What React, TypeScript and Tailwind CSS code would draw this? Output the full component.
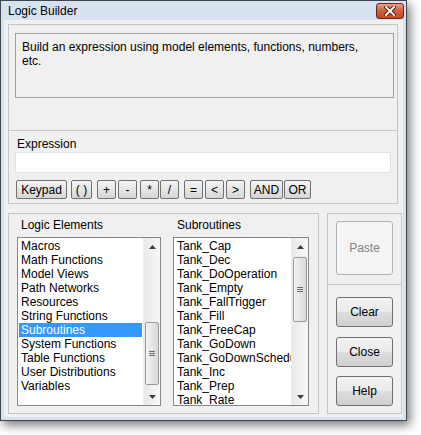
import React from "react";

const font = { fontFamily: '"Liberation Sans", Arial, sans-serif' };

const logicElements = [
  "Macros",
  "Math Functions",
  "Model Views",
  "Path Networks",
  "Resources",
  "String Functions",
  "Subroutines",
  "System Functions",
  "Table Functions",
  "User Distributions",
  "Variables",
];

const subroutines = [
  "Tank_Cap",
  "Tank_Dec",
  "Tank_DoOperation",
  "Tank_Empty",
  "Tank_FallTrigger",
  "Tank_Fill",
  "Tank_FreeCap",
  "Tank_GoDown",
  "Tank_GoDownSchedule",
  "Tank_Inc",
  "Tank_Prep",
  "Tank_Rate",
];

function Arrow({ up }: { up?: boolean }) {
  return (
    <div className="flex h-[17px] items-center justify-center">
      <svg width="7" height="4" viewBox="0 0 7 4">
        {up ? <path d="M3.5 0 L7 4 L0 4 Z" fill="#3c3c3c" /> : <path d="M0 0 L7 0 L3.5 4 Z" fill="#3c3c3c" />}
      </svg>
    </div>
  );
}

function ScrollBar({ offset, thumb }: { offset: string; thumb: string }) {
  return (
    <div className="flex w-[17px] shrink-0 flex-col border-l border-[#ececec] bg-gradient-to-r from-[#e9e9e9] to-[#f7f7f7]">
      <Arrow up />
      <div className={offset} />
      <div
        className={`${thumb} mx-[1px] flex items-center justify-center rounded-[2px] border border-[#9b9b9b] bg-gradient-to-r from-[#f3f3f3] to-[#d9d9d9]`}
      >
        <div className="flex flex-col gap-[1px]">
          <div className="h-px w-[6px] bg-[#6e6e6e]" />
          <div className="h-px w-[6px] bg-[#6e6e6e]" />
          <div className="h-px w-[6px] bg-[#6e6e6e]" />
        </div>
      </div>
      <div className="flex-1" />
      <Arrow />
    </div>
  );
}

function ListBox({
  items,
  selected,
  width,
  offset,
  thumb,
}: {
  items: string[];
  selected?: string;
  width: string;
  offset: string;
  thumb: string;
}) {
  return (
    <div className={`${width} flex h-[169px] border border-[#828790] bg-white`}>
      <div className="min-w-0 flex-1 overflow-hidden pt-[1px]">
        {items.map((item) => (
          <div
            key={item}
            className={`mx-[1px] h-[14px] whitespace-nowrap pl-[2px] text-[12px] leading-[14px] ${
              item === selected ? "bg-[#3399ff] text-white" : "text-black"
            }`}
          >
            {item}
          </div>
        ))}
      </div>
      <ScrollBar offset={offset} thumb={thumb} />
    </div>
  );
}

function OpButton({ label, className }: { label: string; className: string }) {
  return (
    <button
      className={`${className} flex h-[19px] items-center justify-center rounded-[2px] border border-[#707070] bg-gradient-to-b from-[#f4f4f4] to-[#d6d6d6] text-[12px] leading-none text-black`}
    >
      {label}
    </button>
  );
}

function SideButton({ label, className }: { label: string; className: string }) {
  return (
    <button
      className={`${className} flex h-[30px] w-[57px] items-center justify-center rounded-[3px] border border-[#707070] bg-[linear-gradient(to_bottom,#f2f2f2_0%,#ebebeb_48%,#dddddd_52%,#cfcfcf_100%)] text-[12px] text-black`}
    >
      {label}
    </button>
  );
}

export default function App() {
  return (
    <div className="h-[435px] w-[421px] bg-white" style={font}>
      <div className="flex h-[421px] w-[407px] flex-col border border-[#3f4650] bg-[#d8e2ee] shadow-[3px_4px_10px_rgba(0,0,0,0.55)]">
        {/* title bar */}
        <div className="flex h-[19px] shrink-0 items-center justify-between pl-[7px] pr-[2px]">
          <span className="text-[12px] text-black">Logic Builder</span>
          <div className="mt-[1px] flex h-[16px] w-[28px] items-center justify-center rounded-[3px] border border-[#6d2717] bg-gradient-to-b from-[#e3a08d] via-[#cf5d3f] to-[#c4472b]">
            <svg width="12" height="10" viewBox="0 0 12 10">
              <path d="M2 1 L10 9 M10 1 L2 9" stroke="#5a1a0d" strokeWidth="4" strokeLinecap="square" />
              <path d="M2 1 L10 9 M10 1 L2 9" stroke="#ffffff" strokeWidth="2" strokeLinecap="square" />
            </svg>
          </div>
        </div>

        {/* body */}
        <div className="mx-[3px] mb-[3px] flex flex-1 flex-col bg-[#f0f0f0] pl-[4px] pt-[4px]">
          {/* description + expression */}
          <div className="w-[390px] border border-[#c5c5c5]">
            <div className="h-[106px] border-b border-[#c5c5c5] pl-[6px] pt-[8px]">
              <div className="h-[65px] w-[379px] border border-[#a0a0a0] px-[6px] pt-[6px] text-[12px] leading-[14px] text-black">
                Build an expression using model elements, functions, numbers,
                <br />
                etc.
              </div>
            </div>
            <div className="h-[72px] pl-[6px] pt-[6px]">
              <div className="pl-[2px] text-[12px] leading-[14px] text-black">Expression</div>
              <div className="mt-[1px] h-[21px] w-[376px] border border-[#e3e3e3] bg-white" />
              <div className="mt-[7px] flex">
                <OpButton label="Keypad" className="ml-[1px] w-[51px]" />
                <OpButton label="( )" className="ml-[4px] w-[21px]" />
                <OpButton label="+" className="ml-[5px] w-[19px]" />
                <OpButton label="-" className="ml-[2px] w-[19px]" />
                <OpButton label="*" className="ml-[3px] w-[19px]" />
                <OpButton label="/" className="ml-[1px] w-[19px]" />
                <OpButton label="=" className="ml-[5px] w-[19px]" />
                <OpButton label="<" className="ml-[2px] w-[19px]" />
                <OpButton label=">" className="ml-[2px] w-[19px]" />
                <OpButton label="AND" className="ml-[5px] w-[33px]" />
                <OpButton label="OR" className="ml-[1px] w-[27px]" />
              </div>
            </div>
          </div>

          {/* lower section */}
          <div className="mt-[9px] flex">
            <div className="flex h-[201px] w-[311px] border border-[#c5c5c5] pl-[8px] pt-[4px]">
              <div>
                <div className="pl-[4px] text-[12px] leading-[14px] text-black">Logic Elements</div>
                <div className="mt-[5px]">
                  <ListBox
                    items={logicElements}
                    selected="Subroutines"
                    width="w-[144px]"
                    offset="h-[67px] shrink-0"
                    thumb="h-[63px] shrink-0"
                  />
                </div>
              </div>
              <div className="ml-[12px]">
                <div className="pl-[4px] text-[12px] leading-[14px] text-black">Subroutines</div>
                <div className="mt-[5px]">
                  <ListBox
                    items={subroutines}
                    width="w-[136px]"
                    offset="h-[2px] shrink-0"
                    thumb="h-[65px] shrink-0"
                  />
                </div>
              </div>
            </div>

            <div className="ml-[8px] flex h-[201px] w-[75px] flex-col border border-[#c5c5c5]">
              <div className="h-[71px] border-b border-[#c5c5c5] pl-[8px] pt-[7px]">
                <button className="flex h-[54px] w-[57px] items-center justify-center rounded-[3px] border border-[#adb2b5] bg-[#f4f4f4] text-[12px] text-[#838383]">
                  Paste
                </button>
              </div>
              <div className="flex flex-col pl-[8px] pt-[12px]">
                <SideButton label="Clear" className="" />
                <SideButton label="Close" className="mt-[10px]" />
                <SideButton label="Help" className="mt-[9px]" />
              </div>
            </div>
          </div>
        </div>
      </div>
    </div>
  );
}
